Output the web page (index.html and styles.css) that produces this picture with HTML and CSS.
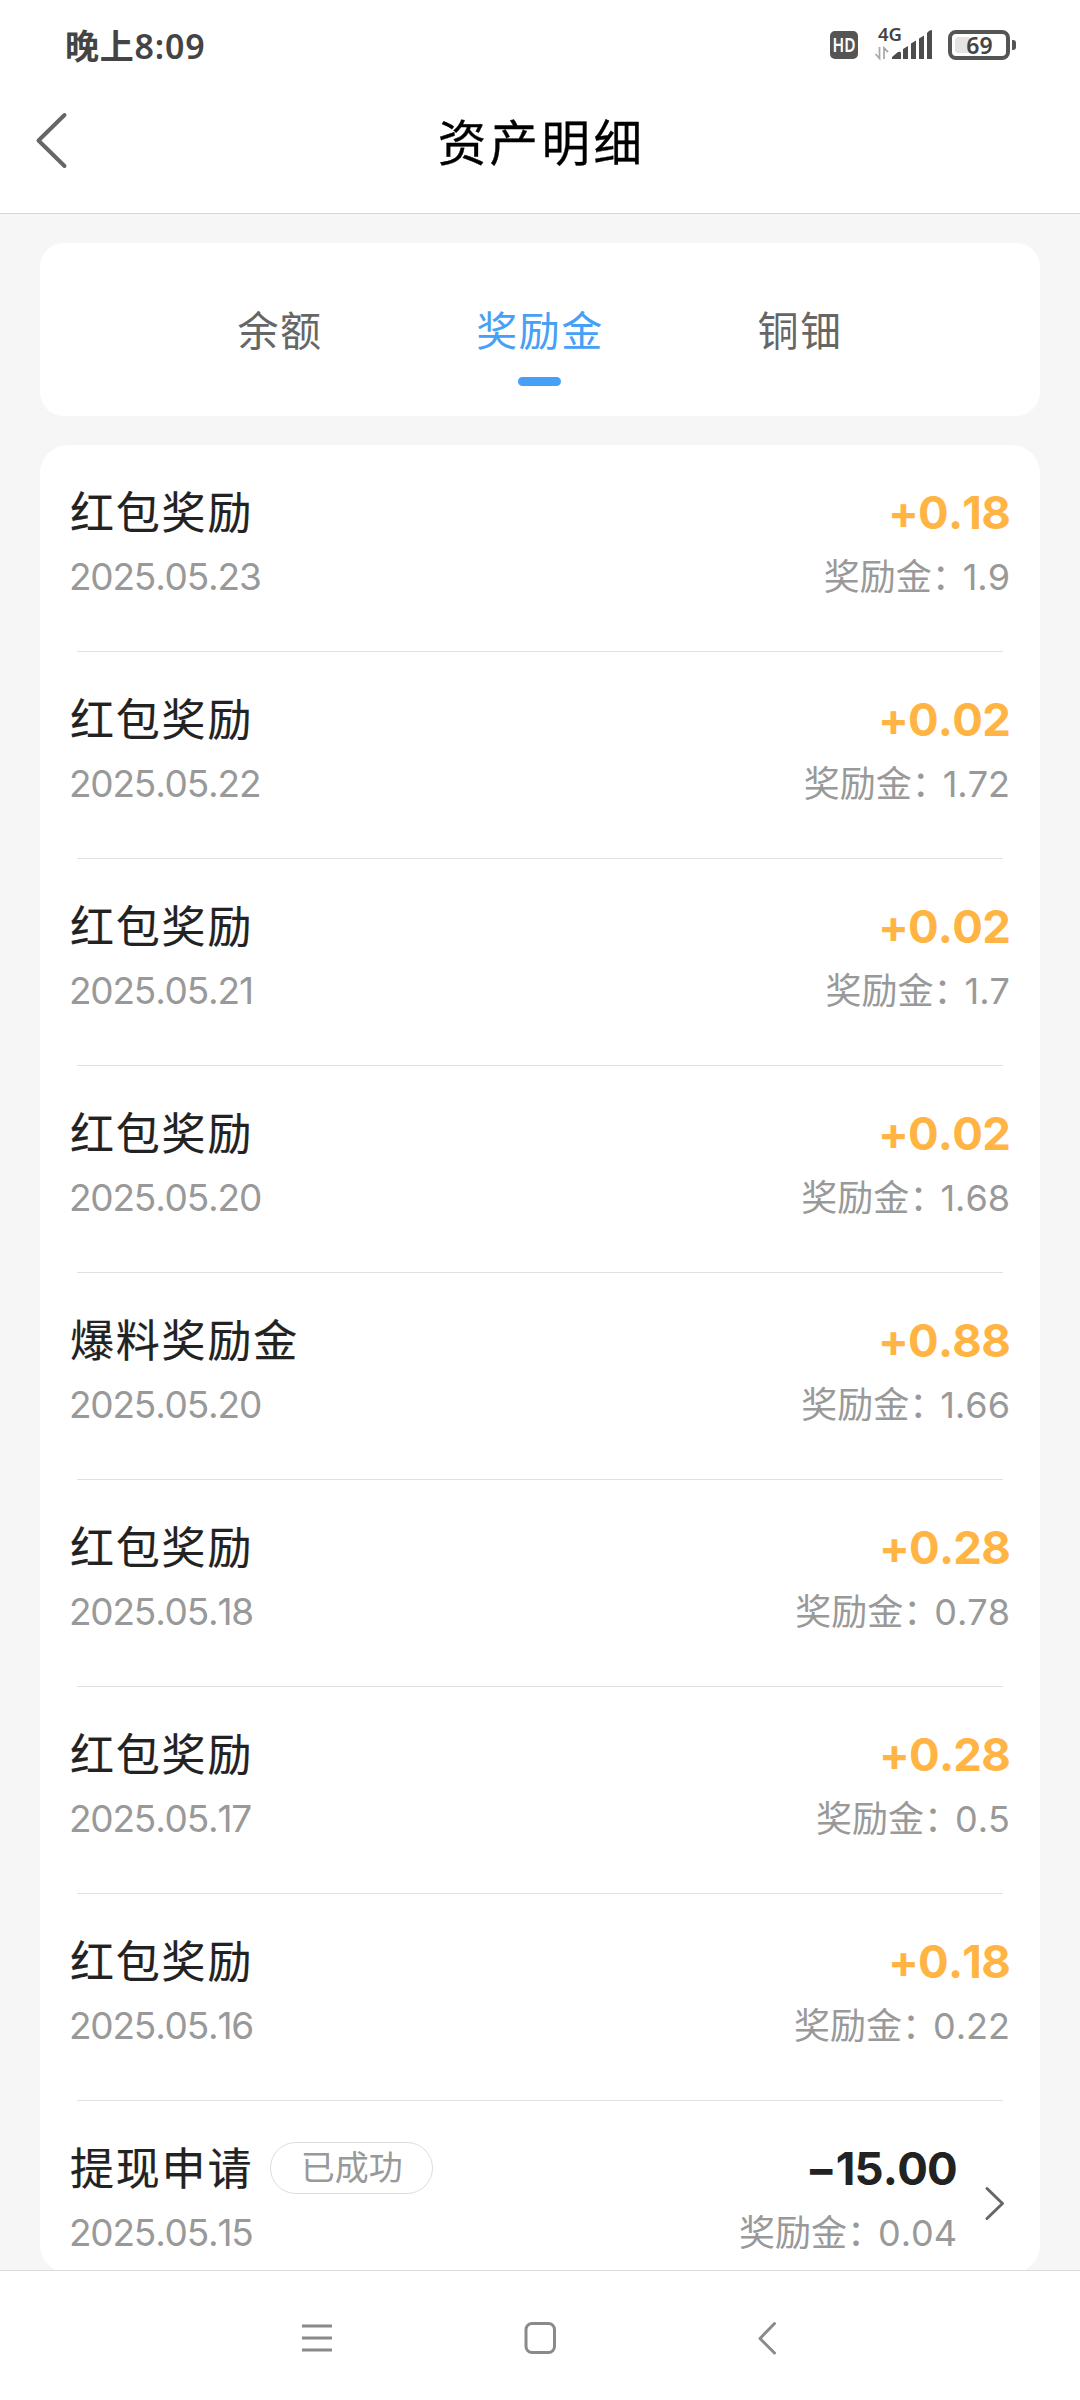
FILE: index.html
```html
<!DOCTYPE html>
<html lang="zh-CN">
<head>
<meta charset="utf-8">
<title>资产明细</title>
<link rel="stylesheet" href="styles.css">
</head>
<body>
<div class="screen">
  <div class="statusbar">
    <span class="clock">晚上8:09</span>
    <svg class="status-icons" width="190" height="60" viewBox="826 15 190 60">
      <rect x="830" y="31" width="28" height="28" rx="5" fill="#555"/>
      <text class="hd" x="844" y="52" text-anchor="middle" textLength="23" lengthAdjust="spacingAndGlyphs">HD</text>
      <text class="net" x="878" y="41" textLength="24" lengthAdjust="spacingAndGlyphs">4G</text>
      <path d="M879.500 47v11.500l-4-4.500M884 59V48l4 4" fill="none" stroke="#aaa" stroke-width="1.8"/>
      <path d="M892 59v-2l6-5q3-1 3 1v6zM903 59V49l5-3v13zM911 59V43.500l5-3V59zM919 59V38.500l5-3V59zM927 59V33q2-3 5-3v29z" fill="#4d4d4d"/>
      <rect x="955" y="37" width="16" height="16" rx="3" fill="#e4e4e4"/>
      <rect x="950" y="32" width="58" height="26" rx="6" fill="none" stroke="#555" stroke-width="4"/>
      <path d="M1012 40h1q3 0 3 3v4q0 3-3 3h-1z" fill="#555"/>
      <text class="batt" x="979.500" y="53.500" text-anchor="middle">69</text>
    </svg>
  </div>
  <header class="header">
    <svg class="back" width="40" height="64" viewBox="0 0 40 64"><path d="M33.500 7 7.500 32.500l26 25.500" fill="none" stroke="#666" stroke-width="4" stroke-linecap="round" stroke-linejoin="round"/></svg>
    <h1 class="title">资产明细</h1>
  </header>
  <main class="content">
    <nav class="tabs">
      <span class="tab">余额</span>
      <span class="tab active">奖励金</span>
      <span class="tab">铜钿</span>
    </nav>
    <section class="list">
      <div class="row">
        <div class="left"><div class="name">红包奖励</div><div class="sub">2025.05.23</div></div>
        <div class="right"><div class="amount">+0.18</div><div class="sub">奖励金<span class="colon">：</span>1.9</div></div>
      </div>
      <div class="row">
        <div class="left"><div class="name">红包奖励</div><div class="sub">2025.05.22</div></div>
        <div class="right"><div class="amount">+0.02</div><div class="sub">奖励金<span class="colon">：</span>1.72</div></div>
      </div>
      <div class="row">
        <div class="left"><div class="name">红包奖励</div><div class="sub">2025.05.21</div></div>
        <div class="right"><div class="amount">+0.02</div><div class="sub">奖励金<span class="colon">：</span>1.7</div></div>
      </div>
      <div class="row">
        <div class="left"><div class="name">红包奖励</div><div class="sub">2025.05.20</div></div>
        <div class="right"><div class="amount">+0.02</div><div class="sub">奖励金<span class="colon">：</span>1.68</div></div>
      </div>
      <div class="row">
        <div class="left"><div class="name">爆料奖励金</div><div class="sub">2025.05.20</div></div>
        <div class="right"><div class="amount">+0.88</div><div class="sub">奖励金<span class="colon">：</span>1.66</div></div>
      </div>
      <div class="row">
        <div class="left"><div class="name">红包奖励</div><div class="sub">2025.05.18</div></div>
        <div class="right"><div class="amount">+0.28</div><div class="sub">奖励金<span class="colon">：</span>0.78</div></div>
      </div>
      <div class="row">
        <div class="left"><div class="name">红包奖励</div><div class="sub">2025.05.17</div></div>
        <div class="right"><div class="amount">+0.28</div><div class="sub">奖励金<span class="colon">：</span>0.5</div></div>
      </div>
      <div class="row">
        <div class="left"><div class="name">红包奖励</div><div class="sub">2025.05.16</div></div>
        <div class="right"><div class="amount">+0.18</div><div class="sub">奖励金<span class="colon">：</span>0.22</div></div>
      </div>
      <div class="row last">
        <div class="left"><div class="name">提现申请<span class="badge">已成功</span></div><div class="sub">2025.05.15</div></div>
        <div class="right"><div class="amount out">−15.00</div><div class="sub">奖励金<span class="colon">：</span>0.04</div></div>
        <svg class="more" width="22" height="36" viewBox="0 0 22 36"><path d="M3 3.500 18.500 18.500 3 33.500" fill="none" stroke="#666" stroke-width="3" stroke-linecap="round" stroke-linejoin="round"/></svg>
      </div>
    </section>
  </main>
  <footer class="navbar">
    <svg width="40" height="40" viewBox="0 0 40 40"><path d="M6 8h30M6 20h30M6 32h30" stroke="#8a8a8a" stroke-width="3"/></svg>
    <svg width="40" height="40" viewBox="0 0 40 40"><rect x="6" y="5.500" width="28.500" height="29" rx="6" fill="none" stroke="#8a8a8a" stroke-width="3"/></svg>
    <svg width="40" height="40" viewBox="0 0 40 40"><path d="M30.500 5.500 16 20.500 30.500 35" fill="none" stroke="#8a8a8a" stroke-width="3" stroke-linecap="round" stroke-linejoin="round"/></svg>
  </footer>
</div>
</body>
</html>
```
FILE: styles.css
```css
* { box-sizing: border-box; }
body {
  margin: 0;
  background: #fff;
  font-family: Inter, "Noto Sans CJK SC", sans-serif;
  font-kerning: none;
}
.screen {
  width: 1080px;
  height: 2400px;
  display: flex;
  flex-direction: column;
  overflow: hidden;
}
.statusbar {
  height: 90px;
  padding: 0 64px 0 65px;
  display: flex;
  justify-content: space-between;
  align-items: center;
  flex: none;
}
.clock {
  padding-top: 1px;
  font-family: "Noto Sans", "Noto Sans CJK SC", sans-serif;
  font-size: 34px;
  font-weight: 600;
  line-height: 50px;
  letter-spacing: 0.800px;
  color: #444;
}
.status-icons { display: block; }
.status-icons text { font-family: "Noto Sans", sans-serif; font-weight: 600; }
.hd { font-size: 20px; fill: #fff; }
.net { font-size: 17px; fill: #444; }
.batt { font-size: 23px; fill: #444; }
.header {
  height: 124px;
  flex: none;
  border-bottom: 1px solid #d6d6d6;
  display: grid;
  grid-template-columns: 70px 1fr 70px;
  align-items: center;
}
.back { display: block; margin: -23px 0 0 31px; }
.title {
  margin: -15px 0 0;
  text-align: center;
  font-size: 48.500px;
  font-weight: 400;
  letter-spacing: 3.400px;
  text-indent: 3px;
  line-height: 72px;
  color: #000;
  -webkit-text-stroke: 0.300px #000;
}
.content {
  flex: 1;
  min-height: 0;
  overflow: hidden;
  background: #f6f6f6;
  padding: 29px 40px 0;
}
.tabs {
  height: 173px;
  border-radius: 24px;
  background: #fff;
  display: grid;
  grid-template-columns: repeat(3, 260px);
  justify-content: center;
  margin-bottom: 29px;
}
.tab {
  display: flex;
  flex-direction: column;
  align-items: center;
  padding-top: 58px;
  font-size: 41px;
  line-height: 60px;
  letter-spacing: 1.500px;
  color: #666;
}
.active { color: #46a0f5; }
.active::after {
  content: "";
  width: 43px;
  height: 9px;
  margin: 16px 1px 0 0;
  border-radius: 5px;
  background: #46a0f8;
}
.list {
  height: 1828px;
  border-radius: 28px;
  background: #fff;
}
.row {
  height: 207px;
  padding: 36px 30px 0 30px;
  display: flex;
  background: linear-gradient(#e0e0e0, #e0e0e0) 37px 100% / 926px 1px no-repeat;
}
.row.last { height: 171px; padding-right: 34px; background: none; }
.left { flex: 1; }
.right { text-align: right; }
.name, .amount {
  height: 62px;
  line-height: 62px;
  display: flex;
  align-items: center;
}
.name {
  padding-top: 2px;
  font-size: 44px;
  letter-spacing: 1.800px;
  color: #222;
  -webkit-text-stroke: 0.200px #222;
}
.amount {
  padding-top: 1px;
  justify-content: flex-end;
  font-size: 45.500px;
  font-weight: 700;
  letter-spacing: -0.800px;
  color: #ffb444;
}
.amount.out { color: #222; }
.sub {
  height: 66px;
  line-height: 68px;
  font-size: 36px;
  letter-spacing: 0;
  color: #999;
}
.left .sub { margin-left: -1px; font-size: 37px; letter-spacing: -1.200px; }
.colon { margin-right: -5px; }
.badge {
  width: 163px;
  height: 52px;
  margin: -3px 0 0 17px;
  border: 1px solid #ddd;
  border-radius: 26px;
  font-size: 34px;
  line-height: 50px;
  letter-spacing: 0;
  text-align: center;
  color: #999;
  -webkit-text-stroke: 0;
}
.more { margin: 48px 0 0 27px; }
.navbar {
  height: 130px;
  flex: none;
  border-top: 1px solid #dcdcdc;
  display: flex;
  justify-content: center;
  gap: 184px;
  padding-top: 47px;
  background: #fff;
}
```
